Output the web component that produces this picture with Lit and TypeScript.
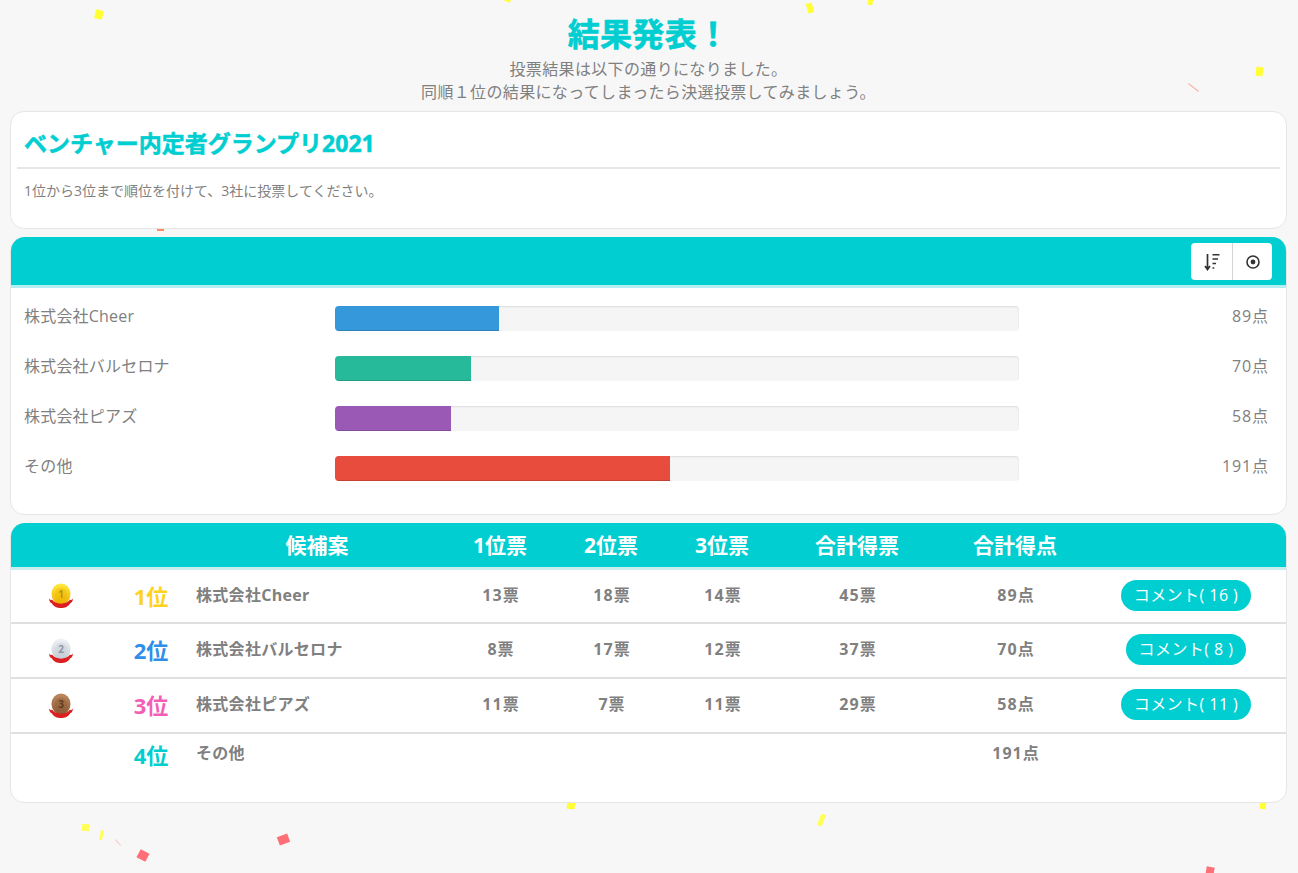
import { LitElement, html, css, svg } from "lit";
import { customElement } from "lit/decorators.js";

const confetti: [number, number, number, number, number, string][] = [
  [95, 10, 8, 9, 12, "#ffff33"],
  [505, -4, 6, 6, 20, "#ffff33"],
  [807, 3, 6, 10, -15, "#ffff33"],
  [868, -3, 5, 8, 10, "#ffff33"],
  [1256, 67, 7, 9, 8, "#ffff33"],
  [1187, 87, 13, 1, 38, "#ffb0a0"],
  [157, 226, 7, 5, 0, "#ff8a60"],
  [567, 800, 8, 9, 5, "#ffff33"],
  [819, 814, 5, 12, 22, "#ffff55"],
  [82, 824, 7, 7, 5, "#ffff55"],
  [100, 830, 3, 10, 12, "#ffff55"],
  [114, 842, 8, 1, 48, "#ffc0c0"],
  [138, 851, 10, 9, 28, "#ff6f78"],
  [278, 835, 11, 9, -20, "#ff6f78"],
  [1206, 867, 8, 9, 10, "#ff6f78"],
  [1260, 802, 6, 7, 10, "#ffff33"],
];

const bars = [
  { n: "株式会社Cheer", w: 164, c: "#3498db", s: "89点" },
  { n: "株式会社バルセロナ", w: 136, c: "#26b99a", s: "70点" },
  { n: "株式会社ピアズ", w: 116, c: "#9b59b6", s: "58点" },
  { n: "その他", w: 335, c: "#e74c3c", s: "191点" },
];

const rows = [
  { m: 1, r: "1位", rc: "#ffd21e", n: "株式会社Cheer", a: "13票", b: "18票", c: "14票", t: "45票", p: "89点", k: 16 },
  { m: 2, r: "2位", rc: "#2f8fe8", n: "株式会社バルセロナ", a: "8票", b: "17票", c: "12票", t: "37票", p: "70点", k: 8 },
  { m: 3, r: "3位", rc: "#f45fb5", n: "株式会社ピアズ", a: "11票", b: "7票", c: "11票", t: "29票", p: "58点", k: 11 },
];

const medalColors: Record<number, [string, string, string]> = {
  1: ["#ffec3c", "#efae00", "#c09000"],
  2: ["#f0f3f6", "#c3ccd6", "#8f98a3"],
  3: ["#c08a60", "#8a5a35", "#5f3c20"],
};

function medal(m: number) {
  const [a, b, c] = medalColors[m];
  return html`<svg class="medal" width="28" height="28" viewBox="0 0 28 28">
    <defs><linearGradient id="mg${m}" x1="0" y1="0" x2="0" y2="1">
      <stop offset="0" stop-color=${a}></stop><stop offset="1" stop-color=${b}></stop>
    </linearGradient></defs>
    ${svg`<ellipse cx="14" cy="12" rx="9.5" ry="10.5" fill="url(#mg${m})"></ellipse>
    <ellipse cx="14" cy="12.5" rx="6" ry="7" fill=${b} fill-opacity="0.35"></ellipse>
    <path d="M5 17.500 C8 23 20 23 23 17.500 C24 18.500 25 18 26 16.500 C25.500 20 24.500 21 23.500 21 C21 25 18 26 14 26 C10 26 7 25 4.500 21 C3.500 21 2.500 20 2 16.500 C3 18 4 18.500 5 17.500Z" fill="#dc2020"></path>
    <text x="14" y="15.500" text-anchor="middle" font-size="10" font-weight="700" font-family="Open Sans, sans-serif" fill=${c}>${m}</text>`}
  </svg>`;
}

@customElement("app-root")
export class AppRoot extends LitElement {
  static styles = css`
    :host {
      display: block;
      position: relative;
      min-height: 873px;
      overflow: hidden;
      background: #f7f7f7;
      font-family: "Open Sans", "Noto Sans CJK JP", sans-serif;
      color: #808080;
    }
    .confetti { position: absolute; display: block; }
    .page {
      position: relative;
      display: flex;
      flex-direction: column;
      padding: 0 11px 0 10px;
    }
    .hero { text-align: center; height: 111px; padding-top: 11px; box-sizing: border-box; }
    h1 {
      margin: 0;
      height: 47px;
      line-height: 45px;
      font-size: 32px;
      font-weight: 700;
      color: #00ced1;
      letter-spacing: 0.3px;
      -webkit-text-stroke: 0.6px #00ced1;
    }
    .hero p { margin: 0; font-size: 16px; line-height: 23px; letter-spacing: 0.35px; }
    .card {
      background: #fff;
      border: 1px solid #e6e6e6;
      border-radius: 14px;
      box-sizing: border-box;
    }
    .intro { height: 118px; padding: 0 6px; margin-bottom: 8px; }
    .intro h2 {
      margin: 0;
      padding: 13px 7px 0;
      box-sizing: border-box;
      line-height: 36px;
      font-size: 23px;
      font-weight: 700;
      color: #00ced1;
      -webkit-text-stroke: 0.5px #00ced1;
      border-bottom: 2px solid #e6e6e6;
      height: 57px;
    }
    .intro p { margin: 0; padding: 12px 7px 0; font-size: 14px; line-height: 20px; }
    .bars { height: 278px; margin-bottom: 8px; }
    .bar-head {
      height: 51px;
      box-sizing: border-box;
      margin: -1px 0 0;
      background: #00ced1;
      border-bottom: 3px solid #b3eef0;
      border-radius: 14px 14px 0 0;
      display: flex;
      justify-content: flex-end;
      align-items: flex-start;
      padding: 6px 14px 0 0;
    }
    .btns {
      display: flex;
      background: #fff;
      border-radius: 4px;
      height: 37px;
    }
    .btns span {
      box-sizing: border-box;
      width: 40px;
      display: flex;
      align-items: center;
      justify-content: center;
    }
    .btns span:first-child { width: 41px; }
    .btns span + span { border-left: 1px solid #d5d5d5; }
    .bar-list { display: flex; flex-direction: column; padding-top: 3px; }
    .bar-row {
      display: grid;
      grid-template-columns: 311px 684px 1fr;
      height: 50px;
      align-items: start;
      padding: 0 17px 0 13px;
      font-size: 16px;
      letter-spacing: 0.2px;
      line-height: 50px;
    }
    .bar-row .score { text-align: right; letter-spacing: 0.9px; }
    .track {
      margin-top: 15px;
      height: 25px;
      background: #f5f5f5;
      border-radius: 4px;
      box-shadow: inset 0 1px 2px rgba(0, 0, 0, 0.1);
      overflow: hidden;
    }
    .fill { height: 100%; box-shadow: inset 0 -1px 0 rgba(0, 0, 0, 0.15); }
    .table { height: 280px; }
    .grid {
      display: grid;
      grid-template-columns: 102px 76px 256px 110px 112px 110px 160px 156px 186px;
      align-items: center;
    }
    .thead {
      margin: -1px 0 0;
      height: 47px;
      box-sizing: border-box;
      background: #00ced1;
      border-bottom: 3px solid #c9eef0;
      border-radius: 14px 14px 0 0;
      color: #fff;
      font-size: 21px;
      font-weight: 700;
      text-align: center;
      padding-bottom: 2px;
    }
    .thead > :first-child { grid-column: 3; }
    .row {
      height: 55px;
      box-sizing: border-box;
      border-bottom: 2px solid #e0e0e0;
      font-size: 16px;
      font-weight: 700;
      text-align: center;
    }
    .row.first { height: 54px; }
    .row.last { border-bottom: 0; height: 45px; }
    .row.last > * { align-self: start; padding-top: 11px; }
    .row.last .rank { padding-top: 7px; }
    .medal-cell { padding-right: 2px; }
    .medal { display: block; margin: 0 auto; }
    .rank { font-size: 22px; font-weight: 700; margin-top: -3px; }
    .name { text-align: left; padding-left: 7px; margin-top: -5px; letter-spacing: 0.3px; }
    .v { margin-top: -5px; padding-left: 2px; letter-spacing: 1px; }
    .pill {
      display: inline-block;
      background: #00ced1;
      color: #fff;
      font-size: 16px;
      font-weight: 400;
      line-height: 31px;
      height: 31px;
      padding: 0 13px;
      border-radius: 16px;
      letter-spacing: 0.45px;
    }
    .pillcell { margin-top: -2px; }
  `;

  render() {
    return html`
      ${confetti.map(
        ([x, y, w, h, r, c]) =>
          html`<i class="confetti" style="left:${x}px;top:${y}px;width:${w}px;height:${h}px;background:${c};transform:rotate(${r}deg)"></i>`
      )}
      <div class="page">
        <header class="hero">
          <h1>結果発表！</h1>
          <p>投票結果は以下の通りになりました。</p>
          <p>同順１位の結果になってしまったら決選投票してみましょう。</p>
        </header>

        <section class="card intro">
          <h2>ベンチャー内定者グランプリ2021</h2>
          <p>1位から3位まで順位を付けて、3社に投票してください。</p>
        </section>

        <section class="card bars">
          <div class="bar-head">
            <div class="btns">
              <span>
                <svg width="16" height="18" viewBox="0 0 16 18" fill="none" stroke="#333" stroke-width="1.6">
                  <path d="M3.500 1v15M1 13l2.500 3.500L6 13" stroke-width="1.700"></path>
                  <path d="M8.500 1.800h7M8.500 6h5.500M8.500 10.500h3.500M8.500 15h1.800"></path>
                </svg>
              </span>
              <span>
                <svg width="14" height="14" viewBox="0 0 14 14">
                  <circle cx="7" cy="7" r="6" fill="none" stroke="#333" stroke-width="1.6"></circle>
                  <circle cx="7" cy="7" r="2.4" fill="#333"></circle>
                </svg>
              </span>
            </div>
          </div>
          <div class="bar-list">
            ${bars.map(
              (b) => html`<div class="bar-row">
                <div class="label">${b.n}</div>
                <div class="track"><div class="fill" style="width:${b.w}px;background:${b.c}"></div></div>
                <div class="score">${b.s}</div>
              </div>`
            )}
          </div>
        </section>

        <section class="card table">
          <div class="grid thead">
            <div>候補案</div><div>1位票</div><div>2位票</div><div>3位票</div><div>合計得票</div><div>合計得点</div>
          </div>
          ${rows.map(
            (r, i) => html`<div class="grid row ${i === 0 ? "first" : ""}">
              <div class="medal-cell">${medal(r.m)}</div>
              <div class="rank" style="color:${r.rc}">${r.r}</div>
              <div class="name">${r.n}</div>
              <div class="v">${r.a}</div><div class="v">${r.b}</div><div class="v">${r.c}</div>
              <div class="v">${r.t}</div><div class="v">${r.p}</div>
              <div class="pillcell"><span class="pill">コメント( ${r.k} )</span></div>
            </div>`
          )}
          <div class="grid row last">
            <div></div>
            <div class="rank" style="color:#00ced1">4位</div>
            <div class="name">その他</div>
            <div></div><div></div><div></div><div></div>
            <div class="v">191点</div>
            <div></div>
          </div>
        </section>
      </div>
    `;
  }
}
